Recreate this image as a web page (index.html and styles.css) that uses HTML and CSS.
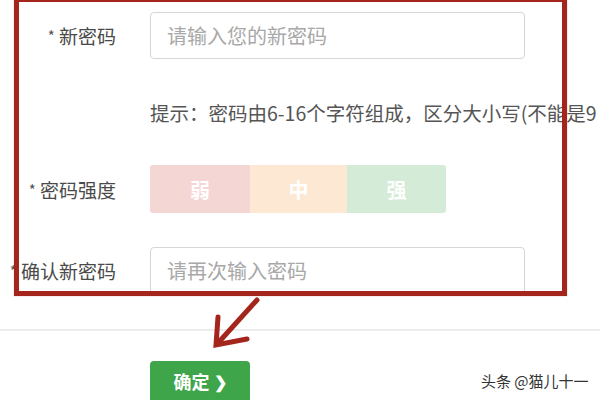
FILE: index.html
```html
<!DOCTYPE html>
<html lang="zh-CN">
<head>
<meta charset="utf-8">
<title>修改密码</title>
<link rel="stylesheet" href="styles.css">
</head>
<body>
<div class="page">
  <form class="form">
    <div class="row">
      <label class="label"><span class="star">*</span> 新密码</label>
      <div class="input"><span class="ph">请输入您的新密码</span></div>
    </div>
    <div class="hint">提示：密码由6-16个字符组成，区分大小写(不能是9</div>
    <div class="row row-strength">
      <label class="label"><span class="star">*</span> 密码强度</label>
      <div class="strength">
        <span class="lvl weak">弱</span>
        <span class="lvl mid">中</span>
        <span class="lvl strong">强</span>
      </div>
    </div>
    <div class="row row-confirm">
      <label class="label"><span class="star">*</span> 确认新密码</label>
      <div class="input"><span class="ph">请再次输入密码</span></div>
    </div>
  </form>
  <div class="divider"></div>
  <div class="actions">
    <button class="btn" type="button">确定 <span class="chev">❯</span></button>
  </div>

  <div class="mark-box"></div>
  <svg class="mark-arrow" width="600" height="400" viewBox="0 0 600 400">
    <path d="M257 300 L218 343" stroke="#a3251b" stroke-width="5" fill="none" stroke-linecap="round"/>
    <path d="M218 317 L216 345 L247 339" stroke="#a3251b" stroke-width="5" fill="none" stroke-linecap="round" stroke-linejoin="miter"/>
  </svg>
  <div class="watermark">头条 @猫儿十一</div>
</div>
</body>
</html>
```
FILE: styles.css
```css
html, body {
  margin: 0;
  padding: 0;
  background: #fff;
}
.page {
  position: relative;
  width: 600px;
  height: 400px;
  overflow: hidden;
  font-family: "Noto Sans CJK SC", "Noto Sans", sans-serif;
  color: #555;
}
.form {
  padding-top: 12px;
}
.row {
  display: grid;
  grid-template-columns: 116px 375px;
  column-gap: 34px;
  align-items: center;
  height: 47px;
}
.label {
  text-align: right;
  font-size: 19px;
  color: #4a4a4a;
  white-space: nowrap;
}
.star {
  font-size: 15px;
  color: #555;
  vertical-align: 2px;
}
.input {
  box-sizing: border-box;
  height: 47px;
  border: 1px solid #d6d6d6;
  border-radius: 4px;
  padding-left: 16px;
  display: flex;
  align-items: center;
  background: #fff;
}
.ph {
  font-size: 20px;
  color: #a8a8a8;
}
.hint {
  margin-top: 40px;
  margin-left: 150px;
  font-size: 19.5px;
  line-height: 28px;
  color: #555;
  white-space: nowrap;
}
.row-strength {
  margin-top: 38px;
  height: 48px;
  grid-template-columns: 116px 296px;
}
.strength {
  display: flex;
  height: 48px;
}
.lvl {
  flex: 0 0 auto;
  width: 99px;
  display: flex;
  align-items: center;
  justify-content: center;
  color: #fff;
  font-weight: bold;
  font-size: 20px;
}
.lvl.weak { background: #f4d6d4; border-radius: 3px 0 0 3px; width: 100px; }
.lvl.mid { background: #fde8d4; width: 97px; }
.lvl.strong { background: #d4ebd7; border-radius: 0 3px 3px 0; }
.row-confirm {
  margin-top: 34px;
}
.divider {
  margin-top: 35px;
  height: 2px;
  background: #ececec;
}
.actions {
  padding-left: 150px;
  margin-top: 30px;
}
.btn {
  width: 100px;
  height: 46px;
  border: none;
  border-radius: 4px;
  background: #3fa54a;
  color: #fff;
  font-family: "Noto Sans CJK SC", sans-serif;
  font-size: 18px;
  font-weight: bold;
  padding: 0 0 6px 0;
  display: flex;
  align-items: center;
  justify-content: center;
  gap: 4px;
}
.chev {
  font-size: 16px;
}
.mark-box {
  position: absolute;
  left: 14px;
  top: -3px;
  width: 553px;
  height: 299px;
  box-sizing: border-box;
  border: 5px solid #a3251b;
  box-shadow: 0 0 1px rgba(163, 37, 27, 0.5);
}
.mark-arrow {
  position: absolute;
  left: 0;
  top: 0;
}
.watermark {
  position: absolute;
  left: 481px;
  top: 370px;
  font-size: 15px;
  color: #333;
  white-space: nowrap;
  text-shadow: 0 0 2px #fff, 0 0 2px #fff;
}
```
